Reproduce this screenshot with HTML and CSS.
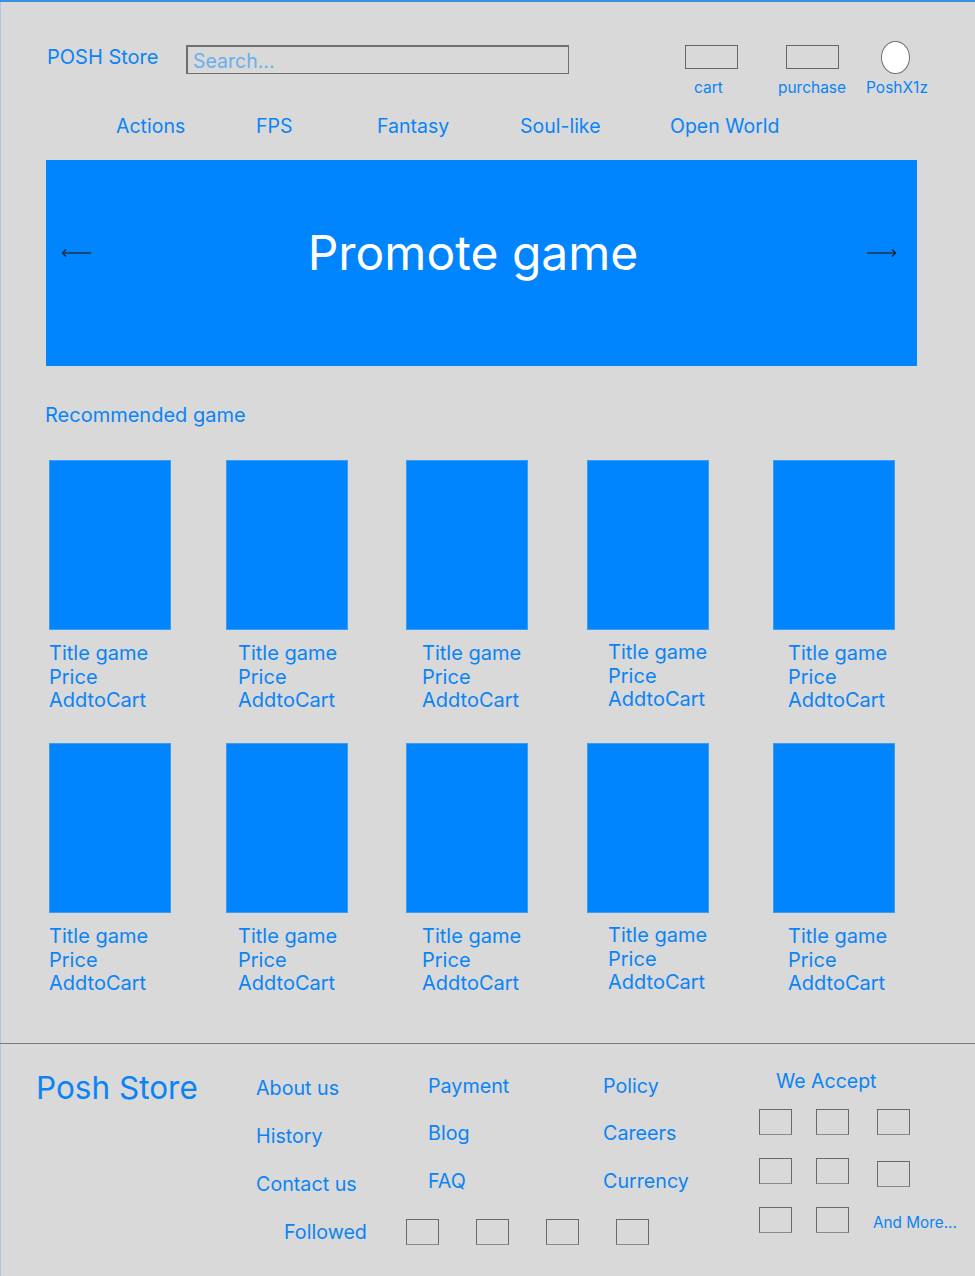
FILE: index.html
```html
<!DOCTYPE html>
<html lang="en">
<head>
<meta charset="utf-8">
<title>POSH Store</title>
<link rel="stylesheet" href="styles.css">
</head>
<body>
<div class="page">
  <header class="topbar">
    <div class="logo">POSH Store</div>
    <div class="search"><span class="placeholder">Search...</span></div>
    <div class="tools">
      <div class="tool tool-cart"><div class="tool-icon"><span class="box"></span></div><span class="tool-label">cart</span></div>
      <div class="tool tool-purchase"><div class="tool-icon"><span class="box"></span></div><span class="tool-label">purchase</span></div>
      <div class="tool tool-user"><div class="tool-icon"><span class="avatar"></span></div><span class="tool-label">PoshX1z</span></div>
    </div>
  </header>

  <nav class="genres">
    <span>Actions</span>
    <span>FPS</span>
    <span>Fantasy</span>
    <span>Soul-like</span>
    <span>Open World</span>
  </nav>

  <section class="banner">
    <svg class="arrow" width="31" height="10" viewBox="0 0 31 10"><path d="M2 5H30" stroke="#17487a" stroke-width="2"/><path d="M5 1.5L1.5 5L5 8.5" stroke="#0b2238" stroke-width="1.4" fill="none"/></svg>
    <h1 class="banner-title">Promote game</h1>
    <svg class="arrow" width="31" height="10" viewBox="0 0 31 10"><path d="M1 5H29" stroke="#17487a" stroke-width="2"/><path d="M26 1.5L29.5 5L26 8.5" stroke="#0b2238" stroke-width="1.4" fill="none"/></svg>
  </section>

  <h2 class="section-title">Recommended game</h2>

  <section class="games">
    <div class="game"><div class="cover"></div><div class="info"><span>Title game</span><span>Price</span><span>AddtoCart</span></div></div>
    <div class="game g2"><div class="cover"></div><div class="info"><span>Title game</span><span>Price</span><span>AddtoCart</span></div></div>
    <div class="game g3"><div class="cover"></div><div class="info"><span>Title game</span><span>Price</span><span>AddtoCart</span></div></div>
    <div class="game g4"><div class="cover"></div><div class="info"><span>Title game</span><span>Price</span><span>AddtoCart</span></div></div>
    <div class="game g5"><div class="cover"></div><div class="info"><span>Title game</span><span>Price</span><span>AddtoCart</span></div></div>
    <div class="game"><div class="cover"></div><div class="info"><span>Title game</span><span>Price</span><span>AddtoCart</span></div></div>
    <div class="game g2"><div class="cover"></div><div class="info"><span>Title game</span><span>Price</span><span>AddtoCart</span></div></div>
    <div class="game g3"><div class="cover"></div><div class="info"><span>Title game</span><span>Price</span><span>AddtoCart</span></div></div>
    <div class="game g4"><div class="cover"></div><div class="info"><span>Title game</span><span>Price</span><span>AddtoCart</span></div></div>
    <div class="game g5"><div class="cover"></div><div class="info"><span>Title game</span><span>Price</span><span>AddtoCart</span></div></div>
  </section>

  <footer class="footer">
    <div class="footer-main">
      <div class="brand">Posh Store</div>
      <div class="links links-1"><span>About us</span><span>History</span><span>Contact us</span></div>
      <div class="links links-2"><span>Payment</span><span>Blog</span><span>FAQ</span></div>
      <div class="links links-3"><span>Policy</span><span>Careers</span><span>Currency</span></div>
      <div class="followed">
        <span class="followed-label">Followed</span>
        <span class="box sq"></span><span class="box sq"></span><span class="box sq"></span><span class="box sq"></span>
      </div>
    </div>
    <div class="accept">
      <div class="accept-title">We Accept</div>
      <div class="accept-grid">
        <span class="box sq"></span><span class="box sq"></span><span class="box sq"></span>
        <span class="box sq"></span><span class="box sq"></span><span class="box sq low"></span>
        <span class="box sq"></span><span class="box sq"></span><span class="more">And More...</span>
      </div>
    </div>
  </footer>
</div>
</body>
</html>
```

FILE: styles.css
```css
* { box-sizing: border-box; }

html, body {
  margin: 0;
  padding: 0;
  background: #d9d9d9;
}

body {
  font-family: "Inter", "Noto Sans", "Liberation Sans", sans-serif;
  color: #0a84f5;
}

.page {
  min-height: 1276px;
  background: #d9d9d9;
  box-shadow: inset 0 2px 0 #3a90e4, inset 1px 0 0 #a7c8e8;
}

/* ---------- top bar ---------- */
.topbar {
  display: flex;
  align-items: flex-start;
  padding: 41px 0 0 47px;
}

.logo {
  width: 139px;
  margin-top: 4px;
  font-size: 20px;
  line-height: 24px;
}

.search {
  width: 383px;
  height: 29px;
  margin-top: 4px;
  border: 2px solid #6f6f6f;
  border-right-width: 1px;
  border-bottom-width: 1px;
  padding: 2px 0 0 5px;
}

.placeholder {
  font-size: 19.5px;
  line-height: 24px;
  color: #6aaeec;
}

.tools {
  display: flex;
  margin-left: 112px;
}

.tool {
  display: flex;
  flex-direction: column;
  align-items: center;
}

.tool-cart { width: 60px; }
.tool-purchase { width: 80px; margin-left: 31px; }
.tool-user { width: 70px; margin-left: 8px; }

.tool-icon {
  height: 32px;
  display: flex;
  align-items: center;
}

.box {
  display: block;
  width: 53px;
  height: 24px;
  border: 1px solid #666;
}

.avatar {
  display: block;
  width: 29px;
  height: 33px;
  border-radius: 50%;
  border: 1px solid #707070;
  background: #fff;
}

.tool-label {
  margin-top: 6px;
  font-size: 15.5px;
  line-height: 18px;
}

.tool-cart .tool-label { margin-right: 5px; }
.tool-user .tool-label { margin-left: 4px; }

/* ---------- genres ---------- */
.genres {
  display: grid;
  grid-template-columns: 140px 121px 143px 150px auto;
  padding-left: 116px;
  margin-top: 17px;
  font-size: 19.5px;
  line-height: 24px;
}

/* ---------- banner ---------- */
.banner {
  display: flex;
  align-items: center;
  justify-content: space-between;
  margin: 22px 58px 0 46px;
  height: 206px;
  padding: 0 20px 20px 15px;
  background: #0085ff;
}

.banner-title {
  margin: 0 12px 0 0;
  font-weight: 400;
  font-size: 48px;
  line-height: 56px;
  color: #fff;
}

.arrow { display: block; }

/* ---------- games ---------- */
.section-title {
  margin: 37px 0 0 45px;
  font-weight: 400;
  font-size: 20px;
  line-height: 24px;
}

.games {
  display: grid;
  grid-template-columns: 177px 180px 181px 186px 122px;
  row-gap: 30.5px;
  margin: 33px 0 0 49px;
}

.cover {
  width: 122px;
  height: 170px;
  background: #0085ff;
  border: 1px solid #3d9ef0;
}

.info {
  display: flex;
  flex-direction: column;
  margin-top: 12px;
  font-size: 20px;
  line-height: 23.5px;
  white-space: nowrap;
}

.g2 .info { padding-left: 12px; }
.g3 .info { padding-left: 16px; }
.g4 .info { padding-left: 21px; margin-top: 11px; }
.g5 .info { padding-left: 15px; }

/* ---------- footer ---------- */
.footer {
  display: flex;
  margin-top: 47px;
  border-top: 1px solid #7a7a7a;
  padding: 32px 0 30px 36px;
}

.footer-main {
  display: grid;
  grid-template-columns: 220px 172px 175px 156px;
  grid-template-rows: auto auto;
}

.brand {
  margin-top: -7px;
  font-size: 31.5px;
  line-height: 38px;
}

.links {
  display: flex;
  flex-direction: column;
  font-size: 19.7px;
  line-height: 24px;
}

.links-1 { row-gap: 24px; }
.links-2, .links-3 { row-gap: 23.5px; margin-top: -2px; }

.followed {
  grid-column: 2 / 5;
  display: flex;
  align-items: center;
  margin-top: 23px;
  padding-left: 28px;
}

.followed-label {
  width: 122px;
  font-size: 19.7px;
  line-height: 24px;
}

.sq {
  width: 33px;
  height: 26px;
  border: 1px solid #6a6a6a;
  border-bottom-color: #8a8a8a;
}

.followed .sq { margin-right: 37px; }

.accept {
  display: flex;
  flex-direction: column;
  margin-top: -7px;
}

.accept-title {
  margin-left: 17px;
  font-size: 19.5px;
  line-height: 24px;
}

.accept-grid {
  display: grid;
  grid-template-columns: 57px 61px auto;
  row-gap: 23px;
  margin-top: 16px;
  align-items: start;
}

.low { margin-top: 3px; margin-bottom: -3px; }

.more {
  margin: 7px 0 0 -4px;
  font-size: 15.3px;
  line-height: 18px;
}
```
